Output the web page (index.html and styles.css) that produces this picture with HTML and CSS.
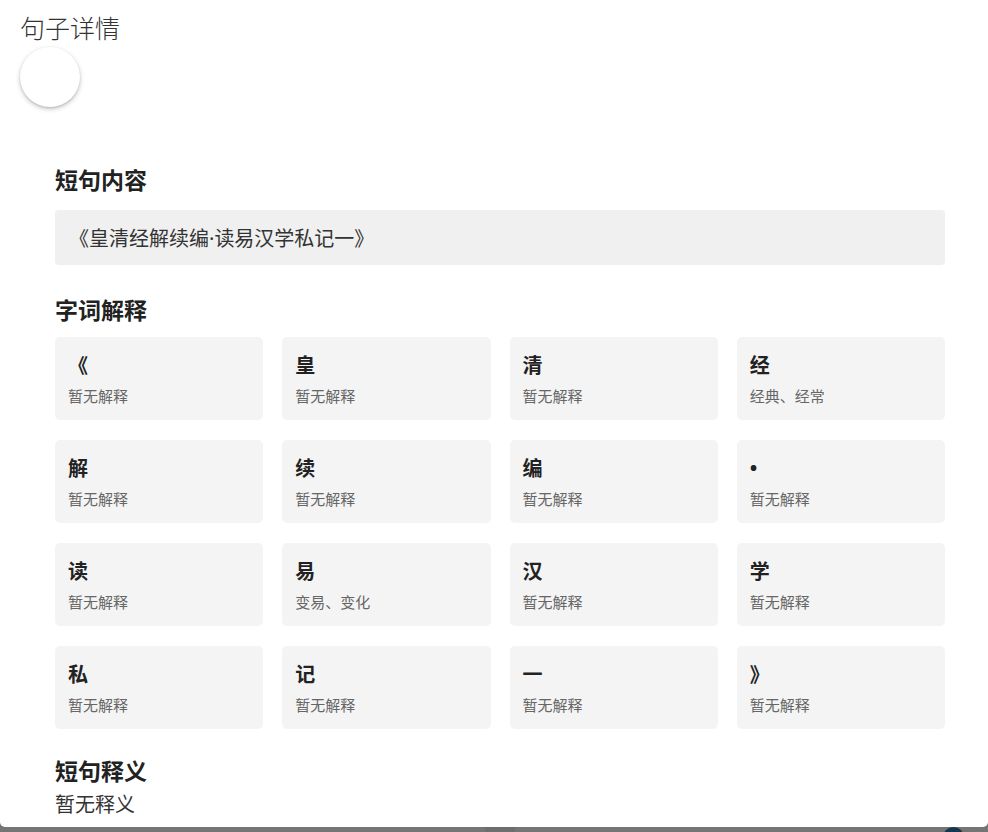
FILE: index.html
```html
<!DOCTYPE html>
<html lang="zh-CN">
<head>
<meta charset="utf-8">
<title>句子详情</title>
<link rel="stylesheet" href="styles.css">
</head>
<body>
<div class="dialog">
  <div class="dialog-head">
    <div class="dialog-title">句子详情</div>
    <div class="fab"></div>
  </div>
  <div class="content">
    <h2 class="sec-title first">短句内容</h2>
    <div class="sentence"><span>《皇清经解续编<span class="latin">·</span>读易汉学私记一》</span></div>

    <h2 class="sec-title">字词解释</h2>
    <div class="grid">
      <div class="card"><div class="ch">《</div><div class="desc">暂无解释</div></div>
      <div class="card"><div class="ch">皇</div><div class="desc">暂无解释</div></div>
      <div class="card"><div class="ch">清</div><div class="desc">暂无解释</div></div>
      <div class="card"><div class="ch">经</div><div class="desc">经典、经常</div></div>
      <div class="card"><div class="ch">解</div><div class="desc">暂无解释</div></div>
      <div class="card"><div class="ch">续</div><div class="desc">暂无解释</div></div>
      <div class="card"><div class="ch">编</div><div class="desc">暂无解释</div></div>
      <div class="card"><div class="ch latin">•</div><div class="desc">暂无解释</div></div>
      <div class="card"><div class="ch">读</div><div class="desc">暂无解释</div></div>
      <div class="card"><div class="ch">易</div><div class="desc">变易、变化</div></div>
      <div class="card"><div class="ch">汉</div><div class="desc">暂无解释</div></div>
      <div class="card"><div class="ch">学</div><div class="desc">暂无解释</div></div>
      <div class="card"><div class="ch">私</div><div class="desc">暂无解释</div></div>
      <div class="card"><div class="ch">记</div><div class="desc">暂无解释</div></div>
      <div class="card"><div class="ch">一</div><div class="desc">暂无解释</div></div>
      <div class="card"><div class="ch">》</div><div class="desc">暂无解释</div></div>
    </div>

    <h2 class="sec-title meaning">短句释义</h2>
    <div class="meaning-text">暂无释义</div>
  </div>
</div>
<div class="backdrop">
  <div class="seg"></div>
  <div class="dot"></div>
</div>
</body>
</html>
```
FILE: styles.css
```css
html, body {
  margin: 0;
  padding: 0;
}
body {
  width: 988px;
  height: 832px;
  overflow: hidden;
  background: #757575;
  font-family: "Noto Sans CJK SC", "Noto Sans", sans-serif;
  color: #333;
}
.latin {
  font-family: "Noto Sans", "Liberation Sans", sans-serif;
}
.dialog {
  height: 827px;
  overflow: hidden;
  background: #fff;
  border-radius: 0 0 5px 5px;
}
.dialog-head {
  padding: 11px 20px 0;
}
.dialog-title {
  font-size: 25px;
  line-height: 33px;
  font-weight: 300;
  color: #333;
}
.fab {
  width: 60px;
  height: 60px;
  margin-top: 3px;
  border-radius: 50%;
  background: #fff;
  box-shadow: 0 2px 5px rgba(0,0,0,0.22), 0 1px 2px rgba(0,0,0,0.12);
}
.content {
  width: 890px;
  padding-left: 55px;
}
.sec-title {
  margin: 0;
  font-size: 23px;
  line-height: 30px;
  font-weight: 700;
  color: #222;
}
.sec-title.first {
  margin-top: 57px;
}
.sentence {
  margin-top: 16px;
  height: 55px;
  box-sizing: border-box;
  padding: 0 14px;
  display: flex;
  align-items: center;
  background: #f0f0f0;
  border-radius: 4px;
  font-size: 20px;
  color: #333;
}
.sentence + .sec-title {
  margin-top: 29px;
}
.grid {
  margin-top: 13px;
  display: grid;
  grid-template-columns: repeat(4, 1fr);
  column-gap: 19px;
  row-gap: 20px;
}
.card {
  height: 83px;
  box-sizing: border-box;
  padding: 14px 13px 0;
  background: #f4f4f4;
  border-radius: 5px;
}
.ch {
  font-size: 20px;
  line-height: 28px;
  font-weight: 700;
  color: #222;
}
.desc {
  margin-top: 7px;
  font-size: 15px;
  line-height: 20px;
  color: #666;
}
.sec-title.meaning {
  margin-top: 27px;
  line-height: 28px;
}
.meaning-text {
  margin-top: 7px;
  font-size: 20px;
  line-height: 26px;
  color: #333;
}
.backdrop {
  height: 5px;
  display: flex;
  position: relative;
}
.seg {
  margin-left: 485px;
  width: 30px;
  height: 5px;
  background: #6e6e6e;
}
.dot {
  position: absolute;
  left: 943px;
  top: 0;
  width: 21px;
  height: 21px;
  border-radius: 50%;
  background: #17374f;
}
```
